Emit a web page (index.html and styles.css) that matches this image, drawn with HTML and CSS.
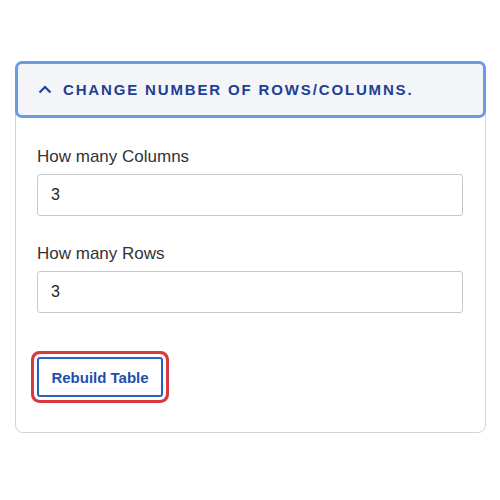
FILE: index.html
```html
<!DOCTYPE html>
<html>
<head>
<meta charset="utf-8">
<link rel="stylesheet" href="styles.css">
</head>
<body>
<div class="card">
  <div class="header">
    <svg class="chev" width="14" height="9" viewBox="0 0 14 9"><path d="M1.5 7.5 L7 2 L12.5 7.5" fill="none" stroke="#1d44a0" stroke-width="2.2"/></svg>
    <span class="title">Change number of rows/columns.</span>
  </div>
  <div class="body">
    <label class="label">How many Columns</label>
    <div class="input">3</div>
    <label class="label second">How many Rows</label>
    <div class="input">3</div>
    <div class="actions">
      <button class="btn">Rebuild Table</button>
    </div>
  </div>
</div>
</body>
</html>
```
FILE: styles.css
```css
html, body { margin: 0; padding: 0; background: #fff; }
body { font-family: "Liberation Sans", Arial, sans-serif; padding: 61px 14px 0 15px; }
.card {
  width: 471px;
  box-sizing: border-box;
  border: 1px solid #d3d3d3;
  border-radius: 8px;
  height: 372px;
  display: flex;
  flex-direction: column;
}
.header {
  margin: -1px -1px 0 -1px;
  height: 57px;
  box-sizing: border-box;
  border: 3px solid #6b9be3;
  border-radius: 7px;
  background: #f4f5f8;
  display: flex;
  align-items: center;
  padding-left: 20px;
  gap: 11px;
}
.chev { flex: none; }
.title {
  text-transform: uppercase;
  color: #1d3f94;
  font-weight: bold;
  font-size: 15px;
  letter-spacing: 1.85px;
}
.body {
  padding: 27px 22px 0 21px;
  display: flex;
  flex-direction: column;
}
.label {
  font-size: 17px;
  line-height: 24px;
  color: #333;
  margin-bottom: 5px;
}
.label.second { margin-top: 26px; }
.input {
  height: 42px;
  box-sizing: border-box;
  border: 1px solid #c8c8c8;
  border-radius: 3px;
  padding: 0 13px;
  display: flex;
  align-items: center;
  font-size: 16px;
  color: #222;
}
.actions { margin-top: 44px; display: flex; }
.btn {
  width: 126px;
  height: 40px;
  box-sizing: border-box;
  border: 2px solid #2a62c2;
  border-radius: 3px;
  background: #fff;
  color: #1f4fae;
  font-family: "Liberation Sans", Arial, sans-serif;
  font-weight: bold;
  font-size: 15px;
  box-shadow: 0 0 0 3px #fff, 0 0 0 6px #d8393f;
}
```
